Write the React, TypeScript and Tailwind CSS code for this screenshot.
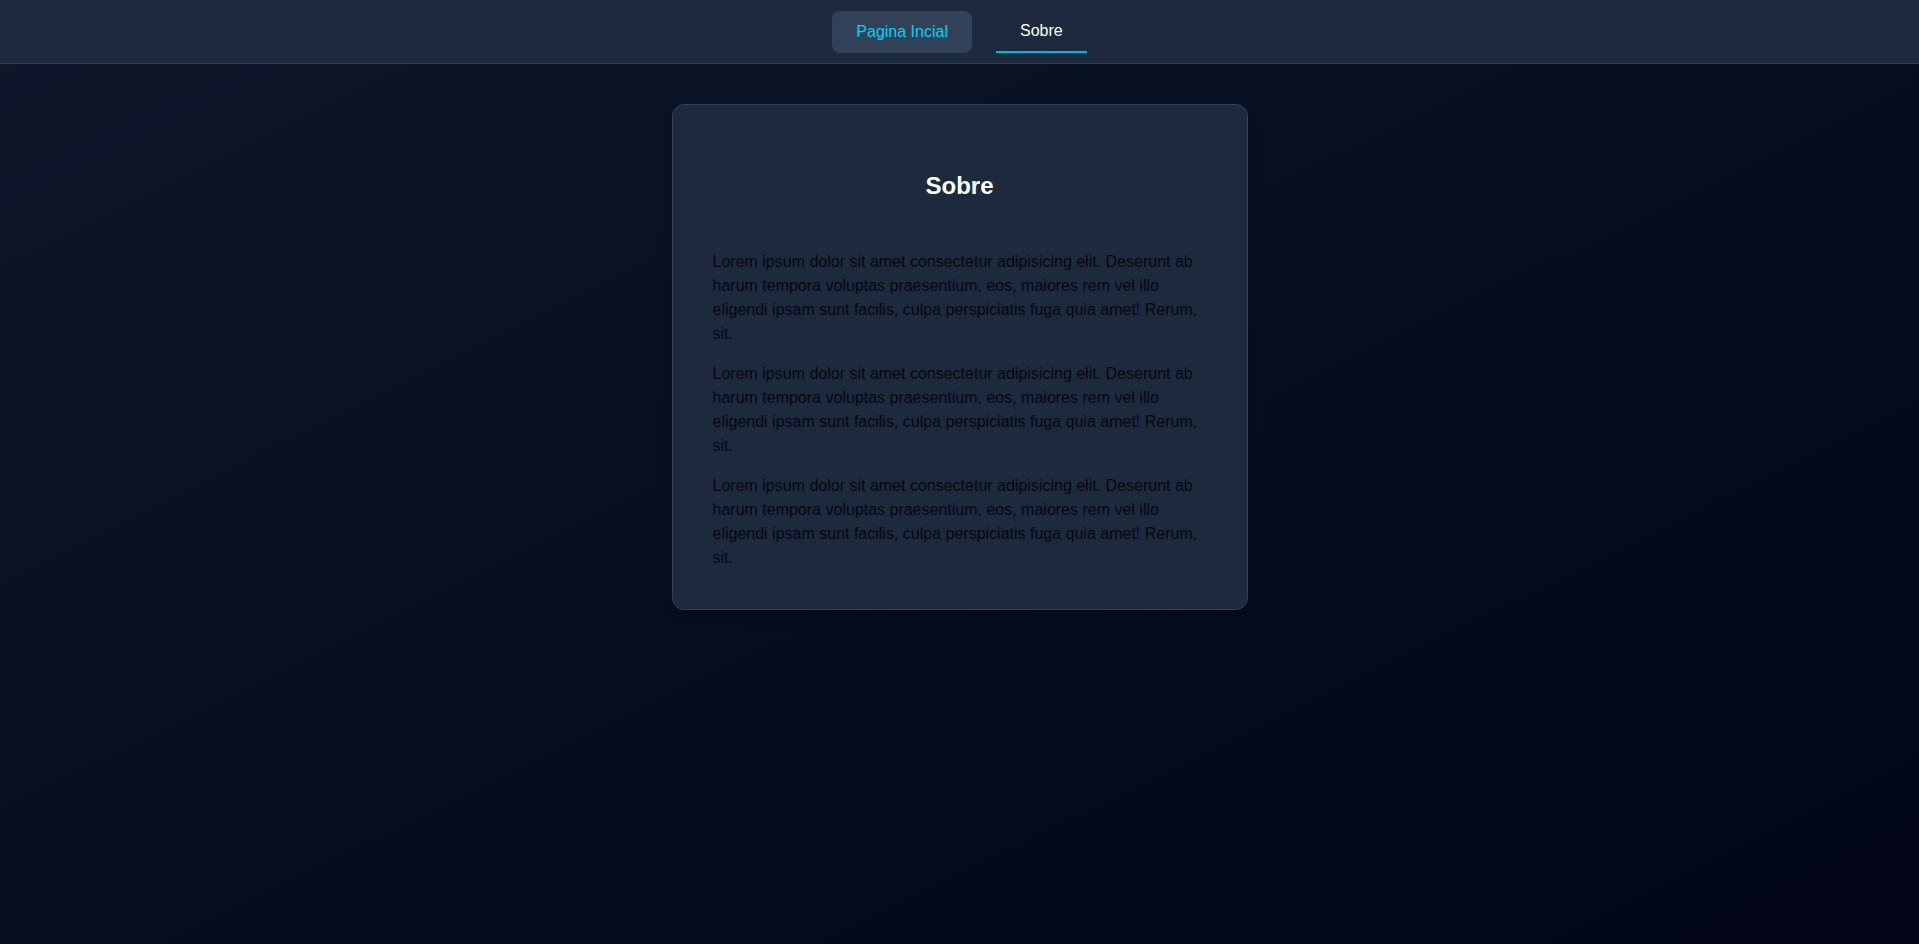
const paragraph =
  'Lorem ipsum dolor sit amet consectetur adipisicing elit. Deserunt ab harum tempora voluptas praesentium, eos, maiores rem vel illo eligendi ipsam sunt facilis, culpa perspiciatis fuga quia amet! Rerum, sit.';

const App = () => {
  return (
    <div className="min-h-screen bg-linear-to-br from-slate-900 to-slate-950 font-['Liberation_Sans',Arial,sans-serif]">
      <nav className="h-16 bg-slate-800 border-b border-slate-700 flex items-center justify-center gap-6">
        <a
          href="#"
          className="h-[42px] px-6 flex items-center rounded-lg bg-slate-700 text-cyan-400 text-base"
        >
          Pagina Incial
        </a>
        <a
          href="#"
          className="h-[42px] px-6 flex items-center border-b-2 border-cyan-500 text-white text-base"
        >
          Sobre
        </a>
      </nav>

      <main className="flex justify-center pt-10">
        <div className="w-full max-w-xl bg-slate-800 border border-slate-700 rounded-xl shadow-lg px-10 pt-[41px] pb-[39px]">
          <h2 className="mt-6 mb-12 text-center text-2xl font-bold text-white">Sobre</h2>
          <div className="space-y-4 text-base leading-6 text-[#05080f]">
            <p>{paragraph}</p>
            <p>{paragraph}</p>
            <p>{paragraph}</p>
          </div>
        </div>
      </main>
    </div>
  );
};

export default App;
